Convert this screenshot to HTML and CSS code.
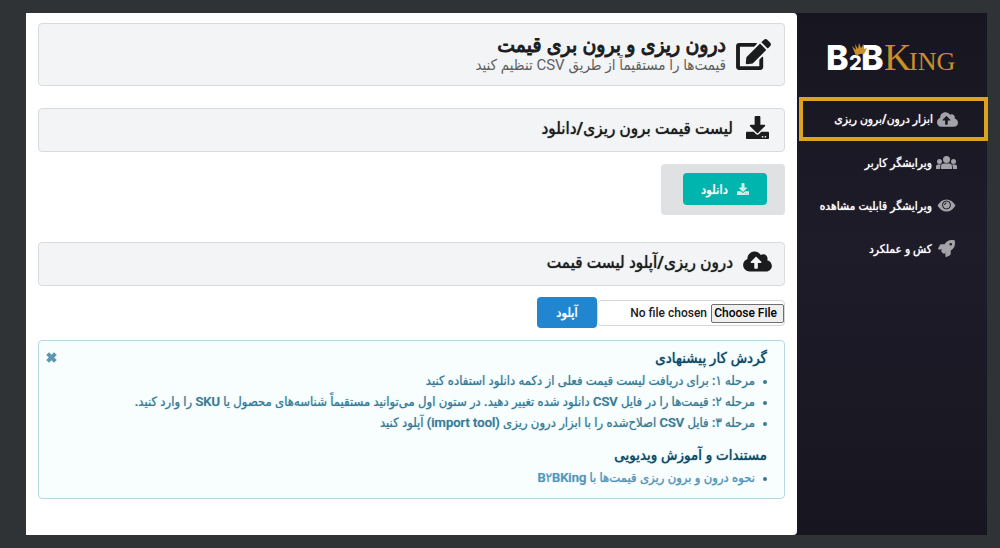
FILE: index.html
```html
<!DOCTYPE html>
<html lang="fa" dir="rtl">
<head>
    <meta charset="UTF-8">
    <meta name="viewport" content="width=device-width, initial-scale=1.0">
    <title>B2BKing</title>
    <link rel="stylesheet" href="styles.css">
</head>
<body>
    <div class="app">
        <!-- Sidebar -->
        <aside class="sidebar">
            <a href="#" class="logo" aria-label="B2BKing">
                <svg width="136" height="50" viewBox="0 0 136 50" direction="ltr">
                    <g class="logo-sans">
                        <text x="1" y="38" font-size="34">B</text>
                        <text x="24" y="38" font-size="20">2</text>
                        <text x="36" y="38" font-size="34">B</text>
                    </g>
                    <g class="logo-serif">
                        <text x="59" y="38" font-size="38">K</text>
                        <text x="84" y="38" font-size="26">ING</text>
                    </g>
                    <path class="logo-crown" d="M27 14l4 4-1-6 3 5 1-6 2 5 3-4v5l3-1-3 6q-4-1-8 2z"/>
                </svg>
            </a>
            <nav>
                <ul class="menu">
                    <li class="active">
                        <a href="#">
                            <svg class="icon" viewBox="0 0 640 512"><path d="M537.6 226.6c4.1-10.7 6.4-22.4 6.4-34.6 0-53-43-96-96-96-19.7 0-38.1 6-53.3 16.2C367 64.2 315.3 32 256 32c-88.4 0-160 71.6-160 160 0 2.7.1 5.4.2 8.1C40.2 219.8 0 273.2 0 336c0 79.5 64.5 144 144 144h368c70.7 0 128-57.3 128-128 0-61.9-44-113.6-102.4-125.4zM393.4 288H328v112c0 8.8-7.2 16-16 16h-48c-8.8 0-16-7.2-16-16V288h-65.4c-14.3 0-21.4-17.2-11.3-27.3l105.4-105.4c6.2-6.2 16.4-6.2 22.6 0l105.4 105.4c10.1 10.1 2.9 27.3-11.3 27.3z"/></svg>
                            <span>ابزار درون/برون ریزی</span>
                        </a>
                    </li>
                    <li>
                        <a href="#">
                            <svg class="icon" viewBox="0 0 42 28"><circle cx="21" cy="8" r="7"/><circle cx="7" cy="12" r="5"/><circle cx="35" cy="12" r="5"/><path d="M10 27v-5q0-6 6-6h10q6 0 6 6v5zM0 27v-5q0-4 4-4h6q-2 2-2 9zM42 27v-5q0-4-4-4h-6q2 2 2 9z"/></svg>
                            <span>ویرایشگر کاربر</span>
                        </a>
                    </li>
                    <li>
                        <a href="#">
                            <svg class="icon icon-eye" viewBox="0 0 38 26"><path d="M1 13Q8 1 19 1t18 12q-7 12-18 12T1 13z"/><circle class="iris" cx="19" cy="12" r="8"/><path class="glint" d="M15 12q0-4 4-4"/></svg>
                            <span>ویرایشگر قابلیت مشاهده</span>
                        </a>
                    </li>
                    <li>
                        <a href="#">
                            <svg class="icon" viewBox="0 0 512 512"><path d="M505.1 19.1c-1.2-5.5-6.7-11-12.2-12.2C460.7 0 435.5 0 410.4 0 307.2 0 245.3 55.2 199.1 128H94.8c-16.3 0-35.5 11.9-42.8 26.5L2.5 253.3A28.4 28.4 0 0 0 0 264a24 24 0 0 0 24 24h103.8l-22.5 22.5c-11.3 11.3-13 32.2 0 45.2l50.9 50.9c11.2 11.2 32.2 13.2 45.3 0l22.5-22.4V488a24 24 0 0 0 24 24 28.6 28.6 0 0 0 10.7-2.5l98.7-49.4c14.7-7.3 26.6-26.5 26.6-42.9V312.8c72.6-46.3 128-108.4 128-211.1.1-25.2.1-50.4-6.9-82.6zM384 168a40 40 0 1 1 40-40 40 40 0 0 1-40 40z"/></svg>
                            <span>کش و عملکرد</span>
                        </a>
                    </li>
                </ul>
            </nav>
        </aside>

        <!-- Content -->
        <main class="content">
            <header class="card page-header">
                <svg class="icon" viewBox="0 0 576 512"><path d="M402.6 83.2l90.2 90.2c3.8 3.8 3.8 10 0 13.8L274.4 405.6l-92.8 10.3c-12.4 1.4-22.9-9.1-21.5-21.5l10.3-92.8L388.8 83.2c3.8-3.8 10-3.8 13.8 0zm162-22.9l-48.8-48.8c-15.2-15.2-39.9-15.2-55.2 0l-35.4 35.4c-3.8 3.8-3.8 10 0 13.8l90.2 90.2c3.8 3.8 10 3.8 13.8 0l35.4-35.4c15.2-15.3 15.2-40 0-55.2zM384 346.2V448H64V128h229.8c3.2 0 6.2-1.3 8.5-3.5l40-40c7.6-7.6 2.2-20.5-8.5-20.5H48C21.5 64 0 85.5 0 112v352c0 26.5 21.5 48 48 48h352c26.5 0 48-21.5 48-48V306.2c0-10.7-12.9-16-20.5-8.5l-40 40c-2.2 2.3-3.5 5.3-3.5 8.5z"/></svg>
                <div>
                    <h1>درون ریزی و برون بری قیمت</h1>
                    <p>قیمت‌ها را مستقیماً از طریق CSV تنظیم کنید</p>
                </div>
            </header>

            <section>
                <h2 class="card section-title">
                    <svg class="icon" viewBox="0 0 512 512"><path d="M216 0h80c13.3 0 24 10.7 24 24v168h87.7c17.8 0 26.7 21.5 14.1 34.1L269.7 378.3c-7.5 7.5-19.8 7.5-27.3 0L90.1 226.1c-12.6-12.6-3.7-34.1 14.1-34.1H192V24c0-13.3 10.7-24 24-24zm296 376v112c0 13.3-10.7 24-24 24H24c-13.3 0-24-10.7-24-24V376c0-13.3 10.7-24 24-24h146.7l49 49c20.1 20.1 52.5 20.1 72.6 0l49-49H488c13.3 0 24 10.7 24 24zm-124 88c0-11-9-20-20-20s-20 9-20 20 9 20 20 20 20-9 20-20zm64 0c0-11-9-20-20-20s-20 9-20 20 9 20 20 20 20-9 20-20z"/></svg>
                    <span>لیست قیمت برون ریزی/دانلود</span>
                </h2>
                <div class="download-box">
                    <button type="button" class="btn btn-teal">
                        <svg class="icon" viewBox="0 0 512 512"><path d="M216 0h80c13.3 0 24 10.7 24 24v168h87.7c17.8 0 26.7 21.5 14.1 34.1L269.7 378.3c-7.5 7.5-19.8 7.5-27.3 0L90.1 226.1c-12.6-12.6-3.7-34.1 14.1-34.1H192V24c0-13.3 10.7-24 24-24zm296 376v112c0 13.3-10.7 24-24 24H24c-13.3 0-24-10.7-24-24V376c0-13.3 10.7-24 24-24h146.7l49 49c20.1 20.1 52.5 20.1 72.6 0l49-49H488c13.3 0 24 10.7 24 24zm-124 88c0-11-9-20-20-20s-20 9-20 20 9 20 20 20 20-9 20-20zm64 0c0-11-9-20-20-20s-20 9-20 20 9 20 20 20 20-9 20-20z"/></svg>
                        <span>دانلود</span>
                    </button>
                </div>
            </section>

            <section>
                <h2 class="card section-title">
                    <svg class="icon" viewBox="0 0 640 512"><path d="M537.6 226.6c4.1-10.7 6.4-22.4 6.4-34.6 0-53-43-96-96-96-19.7 0-38.1 6-53.3 16.2C367 64.2 315.3 32 256 32c-88.4 0-160 71.6-160 160 0 2.7.1 5.4.2 8.1C40.2 219.8 0 273.2 0 336c0 79.5 64.5 144 144 144h368c70.7 0 128-57.3 128-128 0-61.9-44-113.6-102.4-125.4zM393.4 288H328v112c0 8.8-7.2 16-16 16h-48c-8.8 0-16-7.2-16-16V288h-65.4c-14.3 0-21.4-17.2-11.3-27.3l105.4-105.4c6.2-6.2 16.4-6.2 22.6 0l105.4 105.4c10.1 10.1 2.9 27.3-11.3 27.3z"/></svg>
                    <span>درون ریزی/آپلود لیست قیمت</span>
                </h2>
                <form class="upload">
                    <input type="file" aria-label="درون ریزی/آپلود لیست قیمت">
                    <button type="button" class="btn btn-blue">آپلود</button>
                </form>
            </section>

            <!-- Help message -->
            <div class="message">
                <button type="button" class="close" aria-label="بستن">
                    <svg viewBox="0 0 10 10"><path d="M2 2l6 6M8 2l-6 6"/></svg>
                </button>
                <h3>گردش کار پیشنهادی</h3>
                <ul>
                    <li>مرحله ۱: برای دریافت لیست قیمت فعلی از دکمه دانلود استفاده کنید</li>
                    <li>مرحله ۲: قیمت‌ها را در فایل CSV دانلود شده تغییر دهید. در ستون اول می‌توانید مستقیماً شناسه‌های محصول یا SKU را وارد کنید.</li>
                    <li>مرحله ۳: فایل CSV اصلاح‌شده را با ابزار درون ریزی (import tool) آپلود کنید</li>
                </ul>
                <h3>مستندات و آموزش ویدیویی</h3>
                <ul>
                    <li><a href="#">نحوه درون و برون ریزی قیمت‌ها با B۲BKing</a></li>
                </ul>
            </div>
        </main>
    </div>
</body>
</html>
```
FILE: styles.css
```css
* {
    margin: 0;
    padding: 0;
    box-sizing: border-box;
}

body {
    font-family: Roboto, 'DejaVu Sans Condensed', 'DejaVu Sans', sans-serif;
    background: #303336;
    min-height: 100vh;
    color: #1b1c1d;
    padding: 13px;
    padding-left: 26px;
    display: flex;
}

ul {
    list-style: none;
}

a {
    text-decoration: none;
}

.icon {
    fill: currentColor;
    flex-shrink: 0;
}

.app {
    flex: 1;
    display: flex;
    background: #1b1a26;
}

/* Sidebar */
.sidebar {
    width: 190px;
    flex-shrink: 0;
    background: linear-gradient(180deg, #17151f 0%, #1e1c29 45%, #17151f 100%);
}

.logo {
    display: flex;
    padding: 19px 26px 15px;
}

.logo-sans {
    font-family: Inter, Roboto, sans-serif;
    font-weight: 800;
    fill: #fff;
}

.logo-serif {
    font-family: 'Liberation Serif', serif;
    fill: #c98f2b;
}

.logo-crown {
    fill: #c98f2b;
}

.menu li {
    height: 43px;
    border: 4px solid transparent;
}

.menu li.active {
    border-color: #dfa11f;
    margin-left: 2px;
    margin-right: -1px;
    height: 44px;
}

.menu a {
    height: 100%;
    display: flex;
    align-items: center;
    gap: 4px;
    padding-right: 26px;
    color: #fff;
    font-size: 12px;
    font-weight: 500;
    text-shadow: 0 0 1px currentColor;
    white-space: nowrap;
}

.menu .icon {
    width: 21px;
    height: 17px;
    color: #a3a2a8;
}

.menu .icon-eye {
    height: 13px;
}

.iris,
.glint {
    fill: none;
    stroke: #1e1c29;
    stroke-width: 2;
}

/* Content */
.content {
    flex: 1;
    min-width: 0;
    background: #fff;
    border-radius: 0 4px 4px 0;
    padding: 10px 12px 36px;
}

.card {
    background: #f3f4f5;
    border: 1px solid #d9dadc;
    border-radius: 4px;
    display: flex;
    align-items: center;
}

.page-header {
    height: 63px;
    padding: 0 13px;
    gap: 10px;
    margin-bottom: 22px;
}

.page-header .icon {
    width: 35px;
    height: 31px;
}

.page-header h1 {
    font-size: 21px;
    line-height: 22px;
    font-weight: 500;
    -webkit-text-stroke: 1px currentColor;
}

.page-header p {
    font-size: 15px;
    line-height: 19px;
    color: #5d5e60;
}

.section-title {
    height: 44px;
    padding: 0 12px 5px;
    gap: 10px;
    font-size: 17px;
    font-weight: 500;
    text-shadow: 0 0 1px currentColor;
}

.section-title .icon {
    width: 29px;
    height: 23px;
}

.download-box {
    width: fit-content;
    background: #e0e1e2;
    border-radius: 4px;
    padding: 9px 18px 10px 22px;
    margin: 12px 0 27px;
}

.btn {
    border: none;
    border-radius: 4px;
    color: #fff;
    font-family: inherit;
    font-size: 13px;
    font-weight: 500;
    text-shadow: 0 0 1px currentColor;
    cursor: pointer;
}

.btn-teal {
    width: 84px;
    height: 32px;
    background: #00b5ad;
    display: flex;
    align-items: center;
    justify-content: center;
    gap: 9px;
}

.btn-teal .icon {
    width: 12px;
    height: 12px;
    opacity: 0.8;
}

.btn-blue {
    width: 60px;
    height: 31px;
    background: #2185d0;
}

.upload {
    display: flex;
    align-items: center;
    margin: 11px 0 12px;
}

.upload input {
    width: 188px;
    height: 26px;
    border: 1px solid #d4d6d8;
    border-radius: 4px;
    font-family: Roboto, sans-serif;
    font-size: 12px;
    font-weight: 500;
    line-height: 20px;
    padding-top: 2px;
}

.upload input::file-selector-button {
    width: 73px;
    height: 19px;
    margin-left: 4px;
    padding-bottom: 3px;
    background: #efefef;
    border: 1px solid #6f6f6f;
    border-radius: 2px;
    font-family: Roboto, sans-serif;
    font-size: 12px;
    font-weight: 500;
}

/* Help message */
.message {
    position: relative;
    background: #f8fdfe;
    border: 1px solid #b5d9e2;
    border-radius: 4px;
    padding: 6px 17px 10px;
    color: #377a95;
}

.message h3 {
    font-size: 15px;
    line-height: 23px;
    font-weight: 500;
    color: #0e4a66;
    text-shadow: 0 0 1px currentColor;
}

.message ul {
    font-size: 13px;
    line-height: 21px;
    font-weight: 500;
    text-shadow: 0 0 1px rgba(55, 122, 149, 0.6);
    margin-bottom: 11px;
}

.message ul:last-child {
    margin-bottom: 0;
}

.message li {
    display: flex;
    gap: 8px;
}

.message li::before {
    content: "";
    width: 4px;
    height: 4px;
    margin-top: 10px;
    border-radius: 50%;
    background: currentColor;
    flex-shrink: 0;
}

.message a {
    color: #5494bd;
}

.close {
    position: absolute;
    top: 10px;
    left: 6px;
    width: 13px;
    height: 13px;
    background: none;
    border: none;
    cursor: pointer;
}

.close svg {
    display: block;
    stroke: #5f97b2;
    stroke-width: 3;
}
```
